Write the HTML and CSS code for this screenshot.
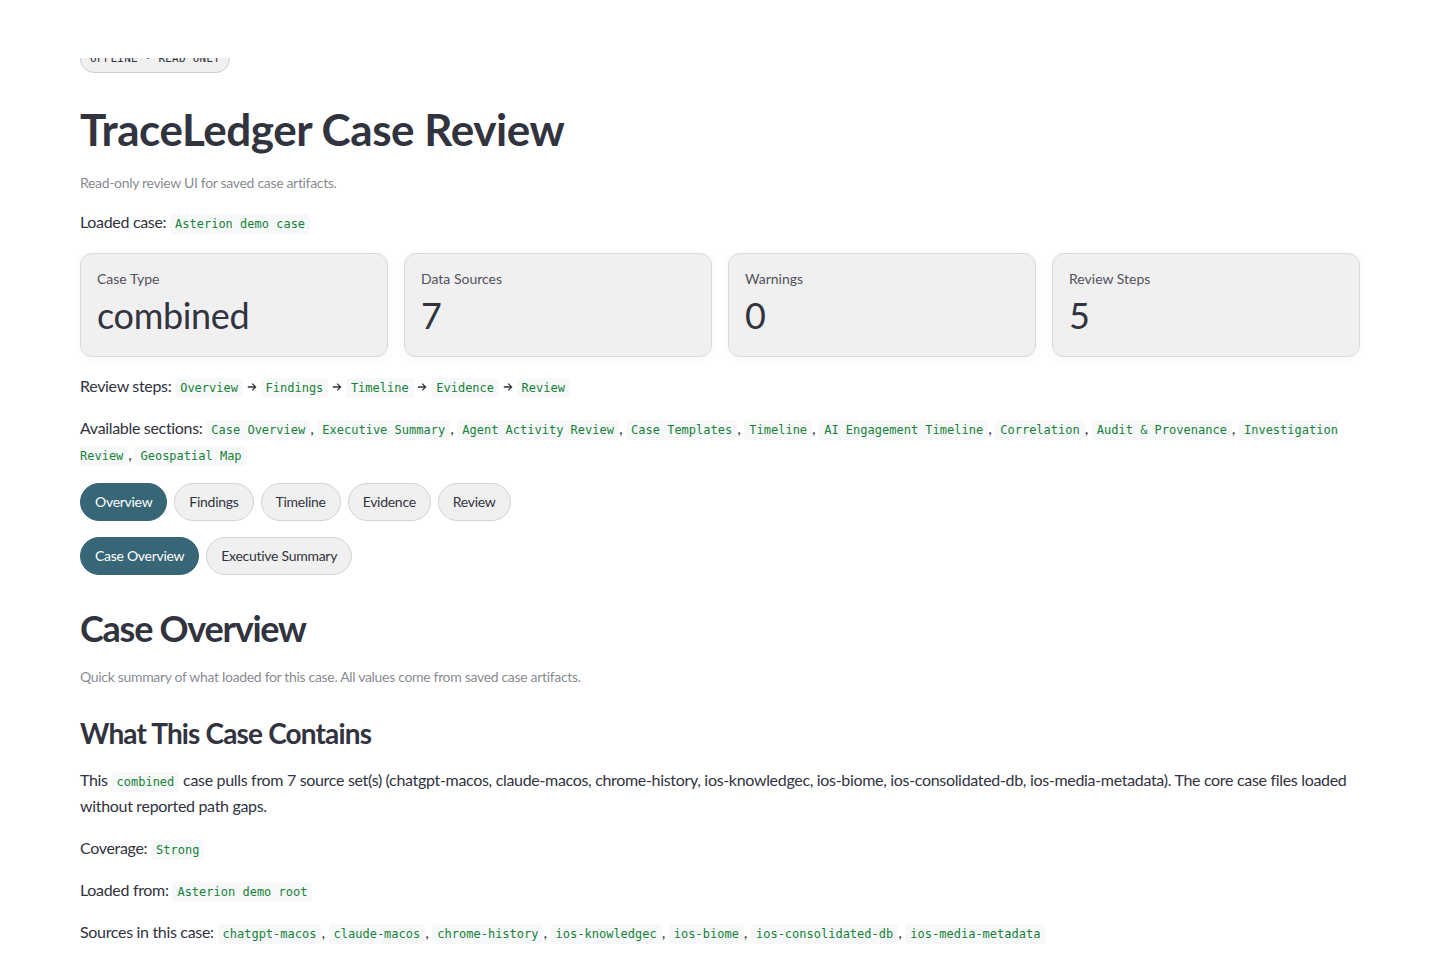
FILE: index.html
```html
<!DOCTYPE html>
<html lang="en">
<head>
<meta charset="UTF-8">
<meta name="viewport" content="width=device-width, initial-scale=1.0">
<title>TraceLedger Case Review</title>
<link rel="stylesheet" href="styles.css">
</head>
<body>
<!-- Fixed app header strip (content scrolls underneath) -->
<div class="topbar"></div>

<div class="main">
  <div class="block">
    <span class="mode-pill">OFFLINE · READ ONLY</span>
  </div>

  <h1 class="title">TraceLedger Case Review</h1>
  <p class="caption">Read-only review UI for saved case artifacts.</p>
  <p class="text">Loaded case: <code>Asterion demo case</code></p>

  <!-- Metric cards -->
  <div class="metrics">
    <div class="metric">
      <div class="metric-label">Case Type</div>
      <div class="metric-value">combined</div>
    </div>
    <div class="metric">
      <div class="metric-label">Data Sources</div>
      <div class="metric-value">7</div>
    </div>
    <div class="metric">
      <div class="metric-label">Warnings</div>
      <div class="metric-value">0</div>
    </div>
    <div class="metric">
      <div class="metric-label">Review Steps</div>
      <div class="metric-value">5</div>
    </div>
  </div>

  <p class="text">Review steps: <code>Overview</code> <svg class="arrow" viewBox="0 0 10 10"><path d="M0.8 5h8M5.2 1.6L8.6 5 5.2 8.4"/></svg> <code>Findings</code> <svg class="arrow" viewBox="0 0 10 10"><path d="M0.8 5h8M5.2 1.6L8.6 5 5.2 8.4"/></svg> <code>Timeline</code> <svg class="arrow" viewBox="0 0 10 10"><path d="M0.8 5h8M5.2 1.6L8.6 5 5.2 8.4"/></svg> <code>Evidence</code> <svg class="arrow" viewBox="0 0 10 10"><path d="M0.8 5h8M5.2 1.6L8.6 5 5.2 8.4"/></svg> <code>Review</code></p>

  <p class="text">Available sections: <code>Case Overview</code>, <code>Executive Summary</code>, <code>Agent Activity Review</code>, <code>Case Templates</code>, <code>Timeline</code>, <code>AI Engagement Timeline</code>, <code>Correlation</code>, <code>Audit &amp; Provenance</code>, <code>Investigation Review</code>, <code>Geospatial Map</code></p>

  <!-- Step navigation -->
  <div class="pill-row">
    <button class="pill active">Overview</button>
    <button class="pill">Findings</button>
    <button class="pill">Timeline</button>
    <button class="pill">Evidence</button>
    <button class="pill">Review</button>
  </div>

  <!-- Section navigation for the current step -->
  <div class="pill-row">
    <button class="pill active">Case Overview</button>
    <button class="pill">Executive Summary</button>
  </div>

  <h2 class="section-title">Case Overview</h2>
  <p class="caption">Quick summary of what loaded for this case. All values come from saved case artifacts.</p>

  <h3 class="sub-title">What This Case Contains</h3>
  <p class="text">This <code>combined</code> case pulls from 7 source set(s) (chatgpt-macos, claude-macos, chrome-history, ios-knowledgec, ios-biome, ios-consolidated-db, ios-media-metadata). The core case files loaded without reported path gaps.</p>
  <p class="text">Coverage: <code>Strong</code></p>
  <p class="text">Loaded from: <code>Asterion demo root</code></p>
  <p class="text">Sources in this case: <code>chatgpt-macos</code>, <code>claude-macos</code>, <code>chrome-history</code>, <code>ios-knowledgec</code>, <code>ios-biome</code>, <code>ios-consolidated-db</code>, <code>ios-media-metadata</code></p>
</div>
</body>
</html>
```

FILE: styles.css
```css
/* Base page */
body {
  margin: 0;
  font-family: "Source Sans Pro", Lato, sans-serif;
  letter-spacing: -0.02em;
  background-color: #FFFFFF;
  color: #31333F;
}

/* Header strip that sits over the scrolled content */
.topbar {
  position: fixed;
  top: 0;
  left: 0;
  right: 0;
  height: 58px;
  background-color: #FFFFFF;
  z-index: 10;
}

/* Main column */
.main {
  width: 1280px;
  padding: 45px 80px 40px;
  display: flex;
  flex-direction: column;
  gap: 16px;
}

.block {
  display: flex;
}

/* Mode badge */
.mode-pill {
  display: inline-block;
  height: 26px;
  line-height: 26px;
  padding: 0 9px;
  border: 1px solid #CFCFD2;
  border-radius: 999px;
  background-color: #F0F0F0;
  font-family: "DejaVu Sans Mono", monospace;
  font-size: 11px;
  letter-spacing: 0.02em;
  color: #31333F;
}

/* Headings */
.title {
  margin: 0;
  padding-top: 14px;
  font-size: 44px;
  font-weight: 700;
  line-height: 1.2;
  letter-spacing: -0.01em;
}

.section-title {
  margin: 0;
  padding-top: 16px;
  font-size: 36px;
  font-weight: 700;
  line-height: 1.2;
  letter-spacing: -0.035em;
}

.sub-title {
  margin: 0;
  padding-top: 14px;
  font-size: 28px;
  font-weight: 700;
  line-height: 1.2;
  letter-spacing: -0.03em;
}

/* Text */
.caption {
  margin: 0;
  font-size: 14px;
  line-height: 21px;
  color: rgba(49, 51, 63, 0.6);
}

.text {
  margin: 0;
  font-size: 16px;
  line-height: 26px;
}

code {
  font-family: "DejaVu Sans Mono", monospace;
  font-size: 12px;
  line-height: 1;
  letter-spacing: 0;
  color: #158237;
  background-color: #F6F8FA;
  padding: 3px 5px;
  border-radius: 4px;
}

.arrow {
  width: 10px;
  height: 10px;
  fill: none;
  stroke: #31333F;
  stroke-width: 1.3;
}

/* Metric cards */
.metrics {
  display: grid;
  grid-template-columns: repeat(4, 1fr);
  gap: 16px;
  margin-top: 2px;
}

.metric {
  background-color: #F0F0F0;
  border: 1px solid #DADADA;
  border-radius: 12px;
  padding: 15px 16px 15px;
  box-shadow: 0 2px 10px rgba(0, 0, 0, 0.04);
}

.metric-label {
  font-size: 14px;
  line-height: 20px;
  color: #50525C;
  letter-spacing: 0;
}

.metric-value {
  font-size: 36px;
  line-height: 52px;
  color: #31333F;
}

/* Navigation pills */
.pill-row {
  display: flex;
  gap: 7px;
}

.pill {
  height: 38px;
  padding: 0 14px;
  border: 1px solid #D3D3D6;
  border-radius: 999px;
  background-color: #F0F0F0;
  color: #31333F;
  font-family: "Source Sans Pro", Lato, sans-serif;
  font-size: 14px;
  letter-spacing: -0.02em;
  cursor: pointer;
}

.pill.active {
  background-color: #376676;
  border-color: #376676;
  color: #FFFFFF;
}
```
